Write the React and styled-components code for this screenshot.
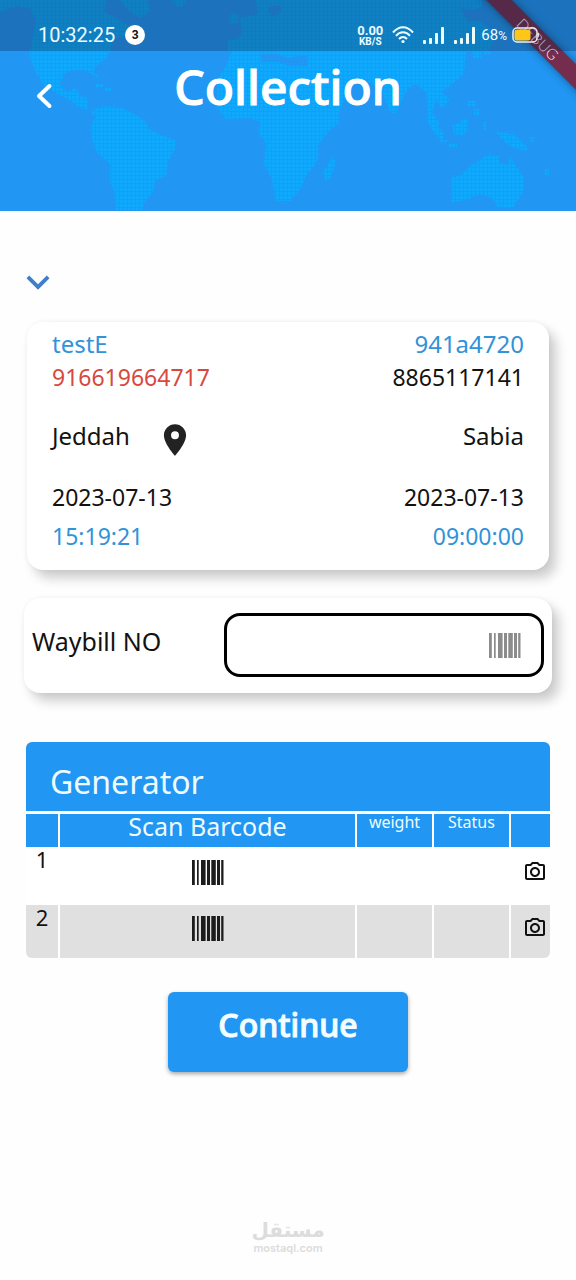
import React from "react";
import styled, { createGlobalStyle } from "styled-components";
import { MdLocationOn, MdKeyboardArrowDown, MdOutlinePhotoCamera } from "react-icons/md";

const blue = "#2196f3";

const GlobalStyle = createGlobalStyle`
  * { box-sizing: border-box; }
  body {
    margin: 0;
    background: #fefefe;
    color: #121212;
    font-family: "Noto Sans", sans-serif;
  }
  button, input { font: inherit; color: inherit; }
`;

const Page = styled.div`
  position: relative;
  display: flex;
  flex-direction: column;
  min-height: 100vh;
  overflow: hidden;
`;

const Header = styled.header`
  position: relative;
  background: ${blue};
  padding-bottom: 88px;
  overflow: hidden;
`;

const MapArt = styled.svg`
  position: absolute;
  inset: 0;
  width: 100%;
  height: 100%;
`;

const StatusBar = styled.div`
  position: relative;
  display: flex;
  align-items: center;
  justify-content: space-between;
  height: 51px;
  padding: 19px 36px 0 38px;
  background: rgba(16, 32, 64, 0.3);
  color: #eefcff;
  font-family: Roboto, sans-serif;
`;

const StatusGroup = styled.div`
  display: flex;
  align-items: center;
  gap: ${(p) => p.$gap}px;
`;

const Clock = styled.time`
  font-size: 20px;
  line-height: 24px;
`;

const CountBadge = styled.span`
  display: grid;
  place-items: center;
  width: 20px;
  height: 20px;
  border-radius: 50%;
  background: #fff;
  color: #111;
  font-size: 12px;
  font-weight: 700;
`;

const NetSpeed = styled.div`
  display: flex;
  flex-direction: column;
  align-items: center;
  font-weight: 700;
  font-size: 10px;
  line-height: 9px;
`;

const SpeedValue = styled.span`
  font-size: 13px;
  line-height: 12px;
`;

const Percent = styled.span`
  font-size: 15px;
  line-height: 20px;
`;

const SmallUnit = styled.span`
  font-size: 12px;
`;

const StatusIcons = styled.div`
  display: flex;
  align-items: center;
  gap: 9px;
`;

const TitleBar = styled.div`
  position: relative;
  display: grid;
  grid-template-columns: 48px 1fr 48px;
  align-items: center;
  padding: 0 20px;
`;

const BackButton = styled.button`
  display: grid;
  place-items: center;
  height: 48px;
  margin-top: 18px;
  padding: 0;
  border: 0;
  background: none;
  color: #fff;
`;

const Title = styled.h1`
  margin: 0;
  color: #fff;
  font-size: 48px;
  font-weight: 500;
  line-height: 72px;
  text-align: center;
  -webkit-text-stroke: 1px #fff;
`;

const DebugBanner = styled.div`
  position: absolute;
  top: 30px;
  right: -57px;
  width: 190px;
  height: 18px;
  transform: rotate(45deg);
  background: rgba(134, 22, 40, 0.82);
  box-shadow: 0 0 8px rgba(0, 0, 0, 0.4);
  color: #ffeef2;
  font-family: Lato, sans-serif;
  font-size: 15px;
  font-weight: 300;
  line-height: 18px;
  text-align: center;
`;

const Main = styled.main`
  display: flex;
  flex-direction: column;
  flex: 1;
  padding: 48px 24px 0;
`;

const ExpandButton = styled.button`
  display: flex;
  justify-content: center;
  align-items: center;
  align-self: flex-start;
  width: 28px;
  height: 46px;
  padding: 0;
  border: 0;
  background: none;
  color: #3f7fc9;
`;

const ExpandIcon = styled(MdKeyboardArrowDown)`
  flex-shrink: 0;
  width: 46px;
  height: 46px;
`;

const Card = styled.section`
  border-radius: 16px;
  background: #fff;
  box-shadow: 7px 8px 12px rgba(0, 0, 0, 0.2), 0 0 5px rgba(0, 0, 0, 0.05);
`;

const ShipmentCard = styled(Card)`
  display: flex;
  flex-direction: column;
  margin: 17px 3px 0;
  padding: 5px 25px 13px;
`;

const InfoRow = styled.div`
  display: flex;
  align-items: center;
  justify-content: space-between;
  height: ${(p) => p.$height}px;
  font-size: ${(p) => (p.$large ? 24 : 23)}px;
  line-height: 34px;
`;

const Value = styled.span`
  color: ${(p) => p.$color || "#121212"};
`;

const Place = styled.span`
  display: flex;
  align-items: center;
  gap: 26px;
`;

const PinIcon = styled(MdLocationOn)`
  width: 38px;
  height: 38px;
  margin-top: 8px;
  color: #222;
`;

const WaybillCard = styled(Card)`
  display: flex;
  align-items: center;
  justify-content: space-between;
  margin-top: 28px;
  padding: 15px 8px 16px;
`;

const WaybillLabel = styled.label`
  padding-bottom: 8px;
  font-size: 25px;
  line-height: 34px;
`;

const WaybillField = styled.div`
  display: flex;
  align-items: center;
  width: 62.5%;
  height: 64px;
  padding: 0 20px;
  border: 3px solid #000;
  border-radius: 16px;
  color: #8b8b8b;
`;

const WaybillInput = styled.input`
  flex: 1;
  min-width: 0;
  height: 40px;
  border: 0;
  outline: 0;
  background: none;
  color: #121212;
  font-size: 24px;
`;

const IconButton = styled.button`
  display: grid;
  place-items: center;
  padding: 0;
  border: 0;
  background: none;
`;

const Generator = styled.section`
  margin: 49px 2px 0;
  border-radius: 6px;
  overflow: hidden;
`;

const GeneratorTitle = styled.h2`
  margin: 0 0 3px;
  padding: 18px 24px 7px;
  background: ${blue};
  color: #eefcff;
  font-size: 32px;
  font-weight: 400;
  line-height: 44px;
`;

const Table = styled.table`
  width: 100%;
  table-layout: fixed;
  border-collapse: separate;
  border-spacing: 0;
`;

const Col = styled.col`
  width: ${(p) => p.$width};
`;

const HeadCell = styled.th`
  height: 33px;
  padding: 0;
  background: ${blue};
  color: #eefcff;
  font-size: ${(p) => (p.$small ? 16 : 25)}px;
  font-weight: 400;
  line-height: ${(p) => (p.$small ? 16 : 24)}px;
  text-align: center;
  vertical-align: top;
  & + & { border-left: 2px solid #fff; }
`;

const BodyRow = styled.tr`
  background: ${(p) => (p.$shaded ? "#e0e0e0" : "#fff")};
  height: ${(p) => (p.$shaded ? 53 : 58)}px;
`;

const Cell = styled.td`
  padding: 0;
  text-align: center;
  vertical-align: top;
  font-size: 22px;
  line-height: 24px;
  & + & { border-left: 2px solid #fff; }
`;

const CellIcon = styled(IconButton)`
  width: 100%;
  height: ${(p) => (p.$compact ? 46 : 50)}px;
  color: #1c1c1c;
`;

const CameraIcon = styled(MdOutlinePhotoCamera)`
  width: 24px;
  height: 24px;
  margin-left: 8px;
  color: #111;
`;

const ContinueButton = styled.button`
  align-self: center;
  width: 240px;
  height: 80px;
  margin-top: 34px;
  padding: 0 0 14px;
  border: 0;
  border-radius: 6px;
  background: ${blue};
  box-shadow: 0 2px 4px rgba(0, 0, 0, 0.35);
  color: #f4fdff;
  font-size: 32px;
  font-weight: 500;
  line-height: 44px;
  -webkit-text-stroke: 1px #f4fdff;
`;

const Watermark = styled.footer`
  display: flex;
  flex-direction: column;
  align-items: center;
  padding-bottom: 25px;
  color: #dcdcdc;
  font-family: Inter, sans-serif;
  font-size: 11px;
  font-weight: 600;
  line-height: 14px;
`;

const WatermarkName = styled.span`
  font-family: "DejaVu Sans", sans-serif;
  font-size: 20px;
  font-weight: 700;
  line-height: 22px;
`;

function WorldMap() {
  return (
    <MapArt viewBox="0 0 576 211" preserveAspectRatio="xMidYMid slice" aria-hidden="true">
      <defs>
        <pattern id="dots" width="4" height="4" patternUnits="userSpaceOnUse">
          <rect width="4" height="4" fill="#1a9cf6" />
          <rect width="3" height="3" fill="#10a9fd" />
        </pattern>
      </defs>
      <g fill="url(#dots)">
        <path d="M0 0H106L104 12L120 20L132 28L124 36L112 40L110 52L104 60L96 66L92 74L84 70L72 70L64 74L60 84L66 92L76 88L80 96L88 98L88 110L80 108L70 100L58 94L44 86L36 72L29 56L32 40L36 20L30 8L16 6L0 12Z" />
        <path d="M96 108L108 106L122 108L134 114L144 120L150 130L164 136L176 140L174 152L168 160L166 176L156 180L152 194L144 202L142 210H116L114 190L110 182L110 164L98 154L92 140L92 124L96 116L90 112Z" />
        <path d="M120 0H148L150 12L140 18L130 12ZM172 0H186L182 7L176 6ZM88 70L100 76L96 78ZM95 84h8v3h-8zM105 88h6v3h-6z" />
        <path d="M256 0H482V6L470 12L478 20L490 28L494 40L488 52H466L464 74L452 84L442 92L450 100L442 108L436 100L432 112L440 124L434 128L428 118L426 92L416 84L408 88L402 100L396 114L390 112L382 92L372 84L350 84L338 116L340 122L328 132L318 146L318 160L306 176L300 190L290 201H276L272 180L264 164L266 144L258 132L260 122L250 118L226 119L217 108V80L226 66L230 56L234 40L242 34L240 18L258 14Z" />
        <path d="M332 157L336 160L332 176L326 182L323 172L328 164ZM230 14h8v9h-8zM228 40h8v12h-8z" />
        <path d="M451 178L462 174L470 166L480 160L486 155L498 155L500 162L508 166L510 156L516 166L524 178V190L518 200L512 208H498L492 198L480 194L466 200L452 202Z" />
        <path d="M452 126L460 122L466 118L469 124L464 136L454 134ZM426 119L434 122L444 134L444 140L436 136ZM449 143h8v4h-8zM439 139h8v3h-8zM496 132L514 134L526 146L528 151L514 148L506 143ZM468 101h8v5h-8zM474 109h6v6h-6zM483 122h3v8h-3zM473 52h8v6h-8zM484 51h8v3h-8zM530 137h4v5h-4zM545 169h4v6h-4z" />
      </g>
      <g fill={blue}>
        <path d="M260 54H276L288 58L308 55V66H290L278 62H262Z" />
        <path d="M270 6h11v5l-8 6-5-6z" />
        <path d="M460 8L484 12V20L468 22Z" />
      </g>
    </MapArt>
  );
}

function WifiIcon() {
  return (
    <svg width="22" height="18" viewBox="0 0 22 18" fill="none" stroke="currentColor" strokeWidth="2" aria-hidden="true">
      <path d="M1 6.500C7-.5 15-.5 21 6.500" />
      <path d="M4 9.800c4-4.600 10-4.600 14 0" />
      <path d="M7 13c2.500-2.600 5.500-2.600 8 0" />
      <circle cx="11" cy="15.500" r="1.600" fill="currentColor" stroke="none" />
    </svg>
  );
}

function SignalIcon() {
  return (
    <svg width="22" height="17" viewBox="0 0 22 17" fill="currentColor" aria-hidden="true">
      <rect x="0" y="13" width="3" height="4" rx="1" />
      <rect x="6" y="11" width="3" height="6" rx="1" />
      <rect x="12" y="6" width="3" height="11" rx="1" />
      <rect x="18" y="0" width="3" height="17" rx="1" />
    </svg>
  );
}

function BatteryIcon() {
  return (
    <svg width="28" height="16" viewBox="0 0 28 16" aria-hidden="true">
      <rect x="1" y="1" width="24" height="14" rx="4" fill="none" stroke="#f1f1f1" strokeWidth="1.500" />
      <path d="M26 5q2 3 0 6z" fill="#f1f1f1" />
      <rect x="2.500" y="2.500" width="16" height="11" rx="2.500" fill="#ffc61a" />
    </svg>
  );
}

function BarcodeIcon() {
  return (
    <svg width="32" height="25" viewBox="0 0 32 25" fill="currentColor" aria-hidden="true">
      <path d="M0 0h2.800v25H0zM5 0h1.700v25H5zM9 0h4.600v25H9zM15 0h3v25h-3zM19.300 0h4.500v25h-4.500zM25 0h3v25h-3zM29.200 0h2.300v25h-2.300z" />
    </svg>
  );
}

const shipment = [
  { left: "testE", right: "941a4720", leftColor: "#3193d8", rightColor: "#3193d8", height: 33, large: true },
  { left: "916619664717", right: "8865117141", leftColor: "#d8483e", height: 34 },
  { left: "Jeddah", right: "Sabia", height: 84, large: true, pin: true },
  { left: "2023-07-13", right: "2023-07-13", height: 37 },
  { left: "15:19:21", right: "09:00:00", leftColor: "#3193d8", rightColor: "#3193d8", height: 42 },
];

export default function App() {
  return (
    <>
      <GlobalStyle />
      <Page>
        <Header>
          <WorldMap />
          <DebugBanner>DEBUG</DebugBanner>
          <StatusBar>
            <StatusGroup $gap={10}>
              <Clock>10:32:25</Clock>
              <CountBadge>3</CountBadge>
            </StatusGroup>
            <StatusGroup $gap={5}>
              <StatusIcons>
                <NetSpeed>
                  <SpeedValue>0.00</SpeedValue>
                  KB/S
                </NetSpeed>
                <WifiIcon />
                <SignalIcon />
                <SignalIcon />
              </StatusIcons>
              <Percent>68<SmallUnit>%</SmallUnit></Percent>
              <BatteryIcon />
            </StatusGroup>
          </StatusBar>
          <TitleBar>
            <BackButton aria-label="Back">
              <svg width="20" height="28" viewBox="0 0 20 28" fill="none" stroke="currentColor" strokeWidth="4" strokeLinecap="round" strokeLinejoin="round">
                <path d="M15.500 4L5 14l10.500 10" />
              </svg>
            </BackButton>
            <Title>Collection</Title>
          </TitleBar>
        </Header>

        <Main>
          <ExpandButton aria-label="Show details">
            <ExpandIcon />
          </ExpandButton>

          <ShipmentCard>
            {shipment.map((row, i) => (
              <InfoRow key={i} $height={row.height} $large={row.large}>
                <Place>
                  <Value $color={row.leftColor}>{row.left}</Value>
                  {row.pin && <PinIcon />}
                </Place>
                <Value $color={row.rightColor}>{row.right}</Value>
              </InfoRow>
            ))}
          </ShipmentCard>

          <WaybillCard>
            <WaybillLabel htmlFor="waybill">Waybill NO</WaybillLabel>
            <WaybillField>
              <WaybillInput id="waybill" type="text" />
              <IconButton aria-label="Scan waybill">
                <BarcodeIcon />
              </IconButton>
            </WaybillField>
          </WaybillCard>

          <Generator>
            <GeneratorTitle>Generator</GeneratorTitle>
            <Table>
              <colgroup>
                <Col $width="32px" />
                <Col />
                <Col $width="77px" />
                <Col $width="77px" />
                <Col $width="41px" />
              </colgroup>
              <thead>
                <tr>
                  <HeadCell />
                  <HeadCell>Scan Barcode</HeadCell>
                  <HeadCell $small>weight</HeadCell>
                  <HeadCell $small>Status</HeadCell>
                  <HeadCell />
                </tr>
              </thead>
              <tbody>
                {[1, 2].map((n) => (
                  <BodyRow key={n} $shaded={n % 2 === 0}>
                    <Cell>{n}</Cell>
                    <Cell>
                      <CellIcon $compact={n % 2 === 0} aria-label={`Scan barcode ${n}`}>
                        <BarcodeIcon />
                      </CellIcon>
                    </Cell>
                    <Cell />
                    <Cell />
                    <Cell>
                      <CellIcon $compact={n % 2 === 0} aria-label={`Take photo ${n}`}>
                        <CameraIcon />
                      </CellIcon>
                    </Cell>
                  </BodyRow>
                ))}
              </tbody>
            </Table>
          </Generator>

          <ContinueButton>Continue</ContinueButton>
        </Main>

        <Watermark>
          <WatermarkName lang="ar" dir="rtl">مستقل</WatermarkName>
          mostaql.com
        </Watermark>
      </Page>
    </>
  );
}
